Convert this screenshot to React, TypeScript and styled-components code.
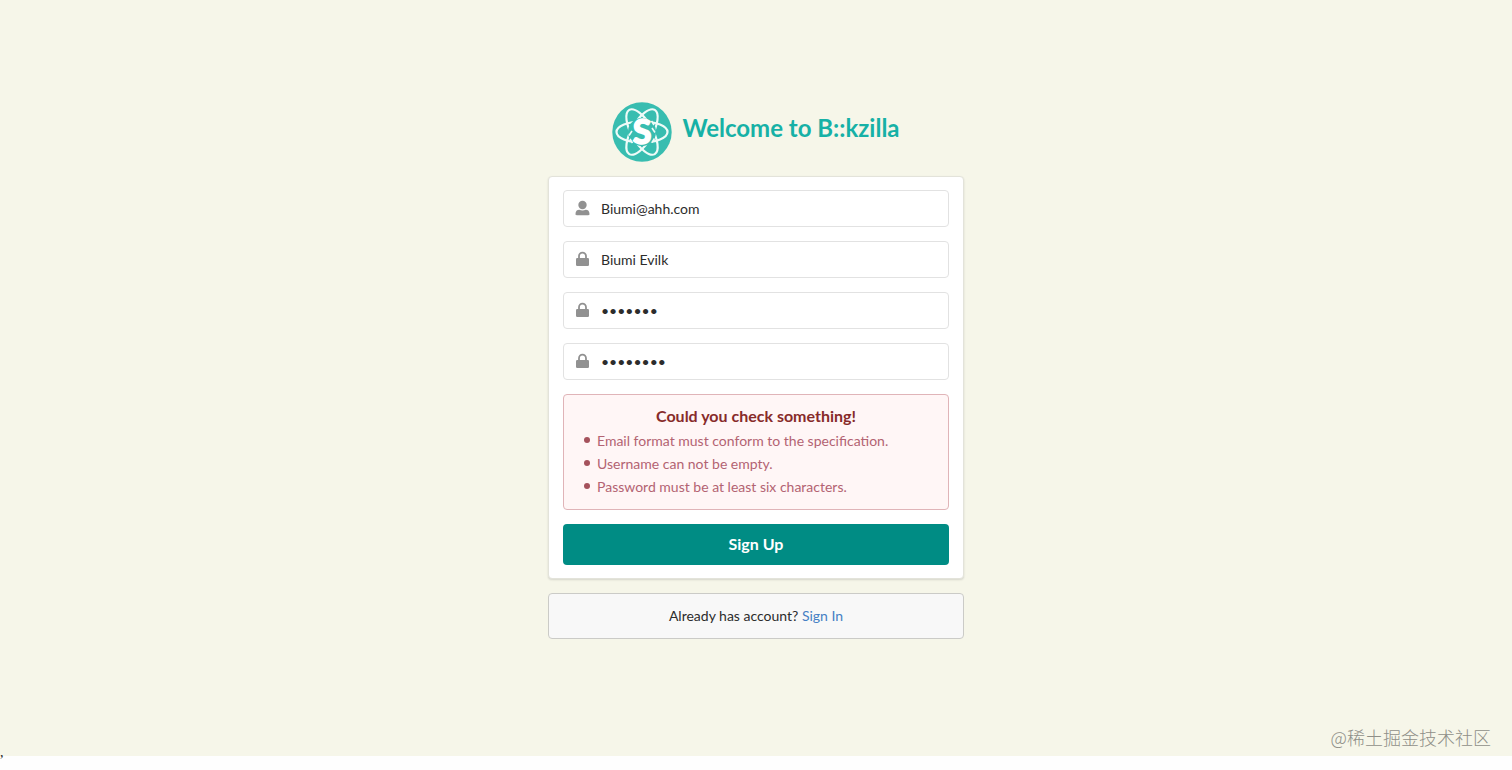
import React from "react";
import styled, { createGlobalStyle } from "styled-components";

const GlobalStyle = createGlobalStyle`
  *, *::before, *::after { box-sizing: border-box; }
  body {
    margin: 0;
    background: #fefefe;
    color: #2c2c2c;
    font-family: Lato, "Noto Sans CJK SC", sans-serif;
    font-size: 14px;
    line-height: 22px;
  }
`;

const Page = styled.div`
  position: relative;
  min-height: 100vh;
  padding-bottom: 14px;
  display: flex;
  flex-direction: column;
`;

const Stage = styled.main`
  flex: 1;
  display: flex;
  flex-direction: column;
  align-items: center;
  justify-content: center;
  padding: 0 16px 16px;
  background: #f6f6e9;
`;

const Column = styled.div`
  width: 100%;
  max-width: 416px;
  display: flex;
  flex-direction: column;
  gap: 14px;
`;

const Header = styled.header`
  display: flex;
  justify-content: center;
  gap: 10px;
`;

const Title = styled.h1`
  margin: 0;
  padding-top: 11px;
  color: #16b1a6;
  font-size: 24px;
  line-height: 30px;
  font-weight: 700;
`;

const Card = styled.form`
  display: flex;
  flex-direction: column;
  gap: 14px;
  padding: 13px 14px;
  background: #fff;
  border: 1px solid #e3e3da;
  border-radius: 4px;
  box-shadow: 0 1px 2px rgba(34, 36, 38, 0.15);
`;

const Field = styled.label`
  display: flex;
  align-items: center;
  height: 37px;
  padding-left: 11px;
  gap: 11px;
  border: 1px solid #e2e2e2;
  border-radius: 4px;
  background: #fff;
  color: #919191;
`;

const Input = styled.input`
  flex: 1;
  min-width: 0;
  height: 100%;
  padding: 0;
  border: 0;
  outline: 0;
  background: transparent;
  color: #2c2c2c;
  font: inherit;
`;

const Message = styled.section`
  padding: 9px 20px 11px;
  background: #fff6f6;
  border: 1px solid #e0b4b8;
  border-radius: 4px;
`;

const MessageTitle = styled.h2`
  margin: 0 0 2px;
  color: #872b2a;
  font-size: 16px;
  line-height: 23px;
  font-weight: 700;
  text-align: center;
`;

const MessageList = styled.ul`
  margin: 0;
  padding: 0;
  list-style: none;
  color: #b36372;
`;

const MessageItem = styled.li`
  display: flex;
  align-items: center;
  gap: 7px;
  line-height: 23px;

  &::before {
    content: "";
    width: 6px;
    height: 6px;
    border-radius: 50%;
    background: #a5525c;
  }
`;

const Submit = styled.button`
  height: 41px;
  padding: 0;
  border: 0;
  border-radius: 4px;
  background: #008c84;
  color: #fff;
  font: inherit;
  font-size: 16px;
  font-weight: 700;
  cursor: pointer;
`;

const SignIn = styled.p`
  margin: 0;
  padding: 11px 14px;
  background: #f8f8f8;
  border: 1px solid #cbcbc7;
  border-radius: 4px;
  text-align: center;
`;

const Link = styled.a`
  color: #4580c4;
  text-decoration: none;
`;

const StrayMark = styled.span`
  position: absolute;
  left: 0;
  bottom: 10px;
  font-family: "Liberation Serif", serif;
  font-size: 14px;
  line-height: 14px;
  color: #222;
`;

const Watermark = styled.span`
  position: absolute;
  right: 21px;
  bottom: 21px;
  color: #8f8f88;
  font-family: "Noto Sans CJK SC", sans-serif;
  font-size: 18px;
  line-height: 24px;
  font-weight: 300;
`;

const LogoLetter = styled.text`
  font-family: Lato, sans-serif;
  font-size: 34px;
  font-weight: 900;
  text-anchor: middle;
  fill: #fff;
  stroke: #fff;
  stroke-width: 1.4px;
`;

const Logo = () => (
  <svg width="60" height="60" viewBox="0 0 60 60" aria-hidden="true">
    <circle cx="30" cy="30" r="29.7" fill="#38bdb0" />
    <g fill="none" stroke="#effbf8" strokeWidth="2.2">
      <ellipse cx="30" cy="30" rx="25.5" ry="10.5" />
      <ellipse cx="30" cy="30" rx="25.5" ry="10.5" transform="rotate(60 30 30)" />
      <ellipse cx="30" cy="30" rx="25.5" ry="10.5" transform="rotate(120 30 30)" />
    </g>
    <circle cx="30" cy="30" r="14" fill="#38bdb0" />
    <LogoLetter x="30" y="42">S</LogoLetter>
    <path
      d="M39.5 19l2.500 4M40 26l3 4.500M20 29l-3 4.500M20.500 41l-2.500-4M42.500 36.500l-2.500 4"
      stroke="#effbf8"
      strokeWidth="1.6"
    />
  </svg>
);

const UserIcon = () => (
  <svg width="15" height="16" viewBox="0 0 15 16" fill="currentColor" aria-hidden="true">
    <circle cx="7.5" cy="5" r="4.2" />
    <path d="M.5 14c0-2.700 1.400-4.200 3.800-4.200.9.5 2 .8 3.200.8s2.300-.3 3.200-.8c2.400 0 3.800 1.500 3.800 4.200 0 .8-.5 1.200-1.200 1.200H1.700c-.7 0-1.200-.4-1.200-1.200z" />
  </svg>
);

const LockIcon = () => (
  <svg width="15" height="16" viewBox="0 0 15 16" aria-hidden="true">
    <path d="M4 8V5.200a3.500 3.500 0 0 1 7 0v2.800" fill="none" stroke="currentColor" strokeWidth="1.8" />
    <rect x="1" y="7" width="13" height="8" rx="1.2" fill="currentColor" />
  </svg>
);

const fields = [
  { name: "Email", type: "email", value: "Biumi@ahh.com", Icon: UserIcon },
  { name: "Username", type: "text", value: "Biumi Evilk", Icon: LockIcon },
  { name: "Password", type: "password", value: "evilk12", Icon: LockIcon },
  { name: "Confirm password", type: "password", value: "evilk123", Icon: LockIcon },
];

const errors = [
  "Email format must conform to the specification.",
  "Username can not be empty.",
  "Password must be at least six characters.",
];

export default function App() {
  return (
    <Page>
      <GlobalStyle />
      <Stage>
        <Column>
          <Header>
            <Logo />
            <Title>Welcome to B::kzilla</Title>
          </Header>
          <Card onSubmit={(event) => event.preventDefault()}>
            {fields.map(({ name, type, value, Icon }) => (
              <Field key={name}>
                <Icon />
                <Input type={type} aria-label={name} defaultValue={value} />
              </Field>
            ))}
            <Message role="alert">
              <MessageTitle>Could you check something!</MessageTitle>
              <MessageList>
                {errors.map((error) => (
                  <MessageItem key={error}>{error}</MessageItem>
                ))}
              </MessageList>
            </Message>
            <Submit type="submit">Sign Up</Submit>
          </Card>
          <SignIn>
            Already has account? <Link href="#signin">Sign In</Link>
          </SignIn>
        </Column>
      </Stage>
      <StrayMark>,</StrayMark>
      <Watermark>@稀土掘金技术社区</Watermark>
    </Page>
  );
}
